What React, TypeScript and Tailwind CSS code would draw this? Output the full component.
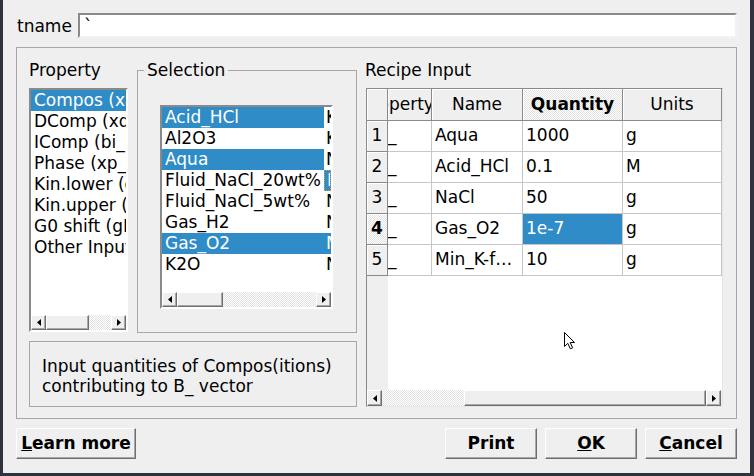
import React from 'react';

const checker = 'bg-[image:repeating-conic-gradient(#ffffff_0_25%,#e2e2e2_0_50%)] bg-[length:2px_2px]';

const ArrowBtn = ({ dir }: { dir: 'left' | 'right' }) => (
  <div className="w-[15px] h-full shrink-0 bg-[#efefef] border border-t-white border-l-white border-r-[#6e6e6e] border-b-[#6e6e6e] shadow-[inset_-1px_-1px_0_#a8a8a8] flex items-center justify-center">
    <svg width="4" height="7" viewBox="0 0 4 7">
      {dir === 'left' ? <polygon points="4,0 4,7 0,3.5" fill="#000" /> : <polygon points="0,0 0,7 4,3.5" fill="#000" />}
    </svg>
  </div>
);

const Thumb = ({ className }: { className: string }) => (
  <div className={`h-full shrink-0 bg-[#efefef] border border-t-white border-l-white border-r-[#6e6e6e] border-b-[#6e6e6e] shadow-[inset_-1px_-1px_0_#a8a8a8] ${className}`} />
);

const properties = [
  'Compos (xa)',
  'DComp (xd)',
  'IComp (bi_)',
  'Phase (xp_)',
  'Kin.lower (dll)',
  'Kin.upper (dul)',
  'G0 shift (gEX)',
  'Other Input',
];

const selection = [
  { name: 'Acid_HCl', unit: 'K', sel: true, selUnit: false },
  { name: 'Al2O3', unit: 'K', sel: false, selUnit: false },
  { name: 'Aqua', unit: 'N', sel: true, selUnit: false },
  { name: 'Fluid_NaCl_20wt%', unit: 'M', sel: false, selUnit: true, focus: true },
  { name: 'Fluid_NaCl_5wt%', unit: 'N', sel: false, selUnit: false },
  { name: 'Gas_H2', unit: 'N', sel: false, selUnit: false },
  { name: 'Gas_O2', unit: 'M', sel: true, selUnit: true },
  { name: 'K2O', unit: 'N', sel: false, selUnit: false },
];

const recipe = [
  { n: '1', name: 'Aqua', qty: '1000', units: 'g' },
  { n: '2', name: 'Acid_HCl', qty: '0.1', units: 'M' },
  { n: '3', name: 'NaCl', qty: '50', units: 'g' },
  { n: '4', name: 'Gas_O2', qty: '1e-7', units: 'g', current: true },
  { n: '5', name: 'Min_K-f…', qty: '10', units: 'g' },
];

// header section: raised look, no height or alignment of its own
const headBase = 'shrink-0 flex items-center border-r border-b border-[#8a8a8a] shadow-[inset_1px_1px_0_#ffffff] overflow-hidden whitespace-nowrap';
const headCell = `${headBase} justify-center`;
const bodyCell = 'h-[31px] shrink-0 flex items-center border-r border-b border-[#c6c6c6] overflow-hidden whitespace-nowrap';
const button = 'h-[31px] w-[92px] flex items-center justify-center font-bold bg-[#efefef] border border-t-white border-l-white border-r-[#6e6e6e] border-b-[#6e6e6e] shadow-[inset_-1px_-1px_0_#a8a8a8]';

export default function App() {
  return (
    <div className="w-[754px] h-[476px] bg-[#2e333d] overflow-hidden font-['DejaVu_Sans',sans-serif] text-[17px] text-black">
      <div className="ml-[3px] w-[747px] h-[473px] bg-[#efefef] flex flex-col px-[13px] pt-[13px]">
        {/* name field */}
        <div className="flex items-center h-[25px]">
          <span className="ml-[1px] w-[61px] leading-[20px]">tname</span>
          <div className="flex-1 h-[25px] bg-white border-2 border-t-[#8a8a8a] border-l-[#8a8a8a] border-r-[#f2f2f2] border-b-[#f2f2f2] flex items-center pl-[4px] leading-[20px]">
            `
          </div>
        </div>

        {/* main frame */}
        <div className="mt-[9px] h-[372px] border border-[#a6a6a6] flex gap-[8px] pl-[12px] pt-[12px]">
          {/* left column */}
          <div className="w-[328px] flex flex-col">
            <div className="flex items-start gap-[9px]">
              <div className="w-[99px] flex flex-col">
                <div className="h-[20px] leading-[20px]">Property</div>
                <div className="mt-[8px] h-[244px] bg-white border-2 border-t-[#8a8a8a] border-l-[#8a8a8a] border-r-white border-b-white flex flex-col overflow-hidden">
                  <div className="flex-1 flex flex-col">
                    {properties.map((p, i) => (
                      <div
                        key={p}
                        className={`h-[21px] leading-[21px] pl-[3px] whitespace-nowrap overflow-hidden ${i === 0 ? 'bg-[#308cc6] text-white' : ''}`}
                      >
                        {p}
                      </div>
                    ))}
                  </div>
                  <div className="h-[15px] flex">
                    <ArrowBtn dir="left" />
                    <Thumb className="w-[43px]" />
                    <div className={`flex-1 h-full ${checker}`} />
                    <ArrowBtn dir="right" />
                  </div>
                </div>
              </div>

              <div className="relative mt-[10px] w-[220px] h-[263px] border border-[#a6a6a6] pt-[34px] pl-[22px]">
                <span className="absolute -top-[11px] left-[6px] px-[3px] bg-[#efefef] leading-[20px]">Selection</span>
                <div className="w-[173px] h-[204px] bg-white border-2 border-t-[#8a8a8a] border-l-[#8a8a8a] border-r-white border-b-white flex flex-col overflow-hidden">
                  <div className="flex-1 flex flex-col">
                    {selection.map((s) => (
                      <div key={s.name} className="h-[21px] flex leading-[21px] whitespace-nowrap">
                        <div className={`w-[162px] shrink-0 pl-[3px] overflow-hidden ${s.sel ? 'bg-[#308cc6] text-white' : ''}`}>
                          {s.name}
                        </div>
                        <div
                          className={`flex-1 pl-[2px] overflow-hidden ${s.selUnit ? 'bg-[#308cc6] text-white' : ''} ${s.focus ? 'border border-dotted border-[#d9a04a] leading-[19px]' : ''}`}
                        >
                          {s.unit}
                        </div>
                      </div>
                    ))}
                  </div>
                  <div className="h-[15px] flex">
                    <ArrowBtn dir="left" />
                    <Thumb className="w-[46px]" />
                    <div className={`flex-1 h-full ${checker}`} />
                    <ArrowBtn dir="right" />
                  </div>
                </div>
              </div>
            </div>

            <div className="mt-[8px] h-[66px] border border-[#a6a6a6] pl-[12px] pt-[14px] leading-[20px]">
              <div>Input quantities of Compos(itions)</div>
              <div>contributing to B_ vector</div>
            </div>
          </div>

          {/* right column */}
          <div className="w-[358px] flex flex-col">
            <div className="h-[20px] leading-[20px]">Recipe Input</div>
            <div className="relative ml-[1px] mt-[8px] w-[357px] h-[319px] border border-t-[#8a8a8a] border-l-[#8a8a8a] border-r-[#e6e6e6] border-b-[#e6e6e6] flex flex-col overflow-hidden">
              <div className="h-[32px] flex shrink-0">
                <div className={`${headCell} h-full w-[21px] bg-[#efefef]`} />
                <div className={`${headBase} justify-start h-full w-[44px] bg-[#efefef]`}>
                  <span className="shrink-0 ml-[-26px]">Property</span>
                </div>
                <div className={`${headCell} h-full w-[91px] bg-[#efefef]`}>Name</div>
                <div className={`${headCell} h-full w-[100px] font-bold ${checker}`}>Quantity</div>
                <div className={`${headCell} h-full w-[99px] bg-[#efefef]`}>Units</div>
              </div>

              <div className="flex-1 flex min-h-0">
                <div className="w-[21px] bg-[#efefef] flex flex-col">
                  {recipe.map((r) => (
                    <div
                      key={r.n}
                      className={`${headCell} h-[31px] ${r.current ? `font-bold ${checker}` : 'bg-[#efefef]'}`}
                    >
                      {r.n}
                    </div>
                  ))}
                </div>
                <div className="flex-1 bg-white flex flex-col">
                  {recipe.map((r) => (
                    <div key={r.n} className="flex">
                      <div className={`${bodyCell} w-[44px]`}>_</div>
                      <div className={`${bodyCell} w-[91px] pl-[3px]`}>{r.name}</div>
                      <div className={`${bodyCell} w-[100px] pl-[3px] ${r.current ? 'bg-[#308cc6] text-white' : ''}`}>{r.qty}</div>
                      <div className={`${bodyCell} w-[99px] pl-[3px]`}>{r.units}</div>
                    </div>
                  ))}
                </div>
              </div>

              <div className="h-[16px] flex shrink-0">
                <ArrowBtn dir="left" />
                <div className={`w-[82px] h-full ${checker}`} />
                <Thumb className="w-[242px]" />
                <ArrowBtn dir="right" />
              </div>

              <svg className="absolute left-[197px] top-[243px]" width="12" height="18" viewBox="0 0 12 18">
                <path d="M0.5 0.5 L0.5 14.5 L3.8 11.3 L6.3 16.8 L8.6 15.8 L6.2 10.5 L10.5 10.5 Z" fill="#ffffff" stroke="#000000" strokeWidth="1" strokeLinejoin="round" />
              </svg>
            </div>
          </div>
        </div>

        {/* buttons */}
        <div className="mt-[9px] flex h-[31px]">
          <div className={`${button} w-[120px]`}>
            <span className="underline">L</span>earn more
          </div>
          <div className="flex-1" />
          <div className={button}>Print</div>
          <div className={`${button} ml-[8px]`}>
            <span className="underline">O</span>K
          </div>
          <div className={`${button} ml-[8px]`}>
            <span className="underline">C</span>ancel
          </div>
        </div>
      </div>
    </div>
  );
}
